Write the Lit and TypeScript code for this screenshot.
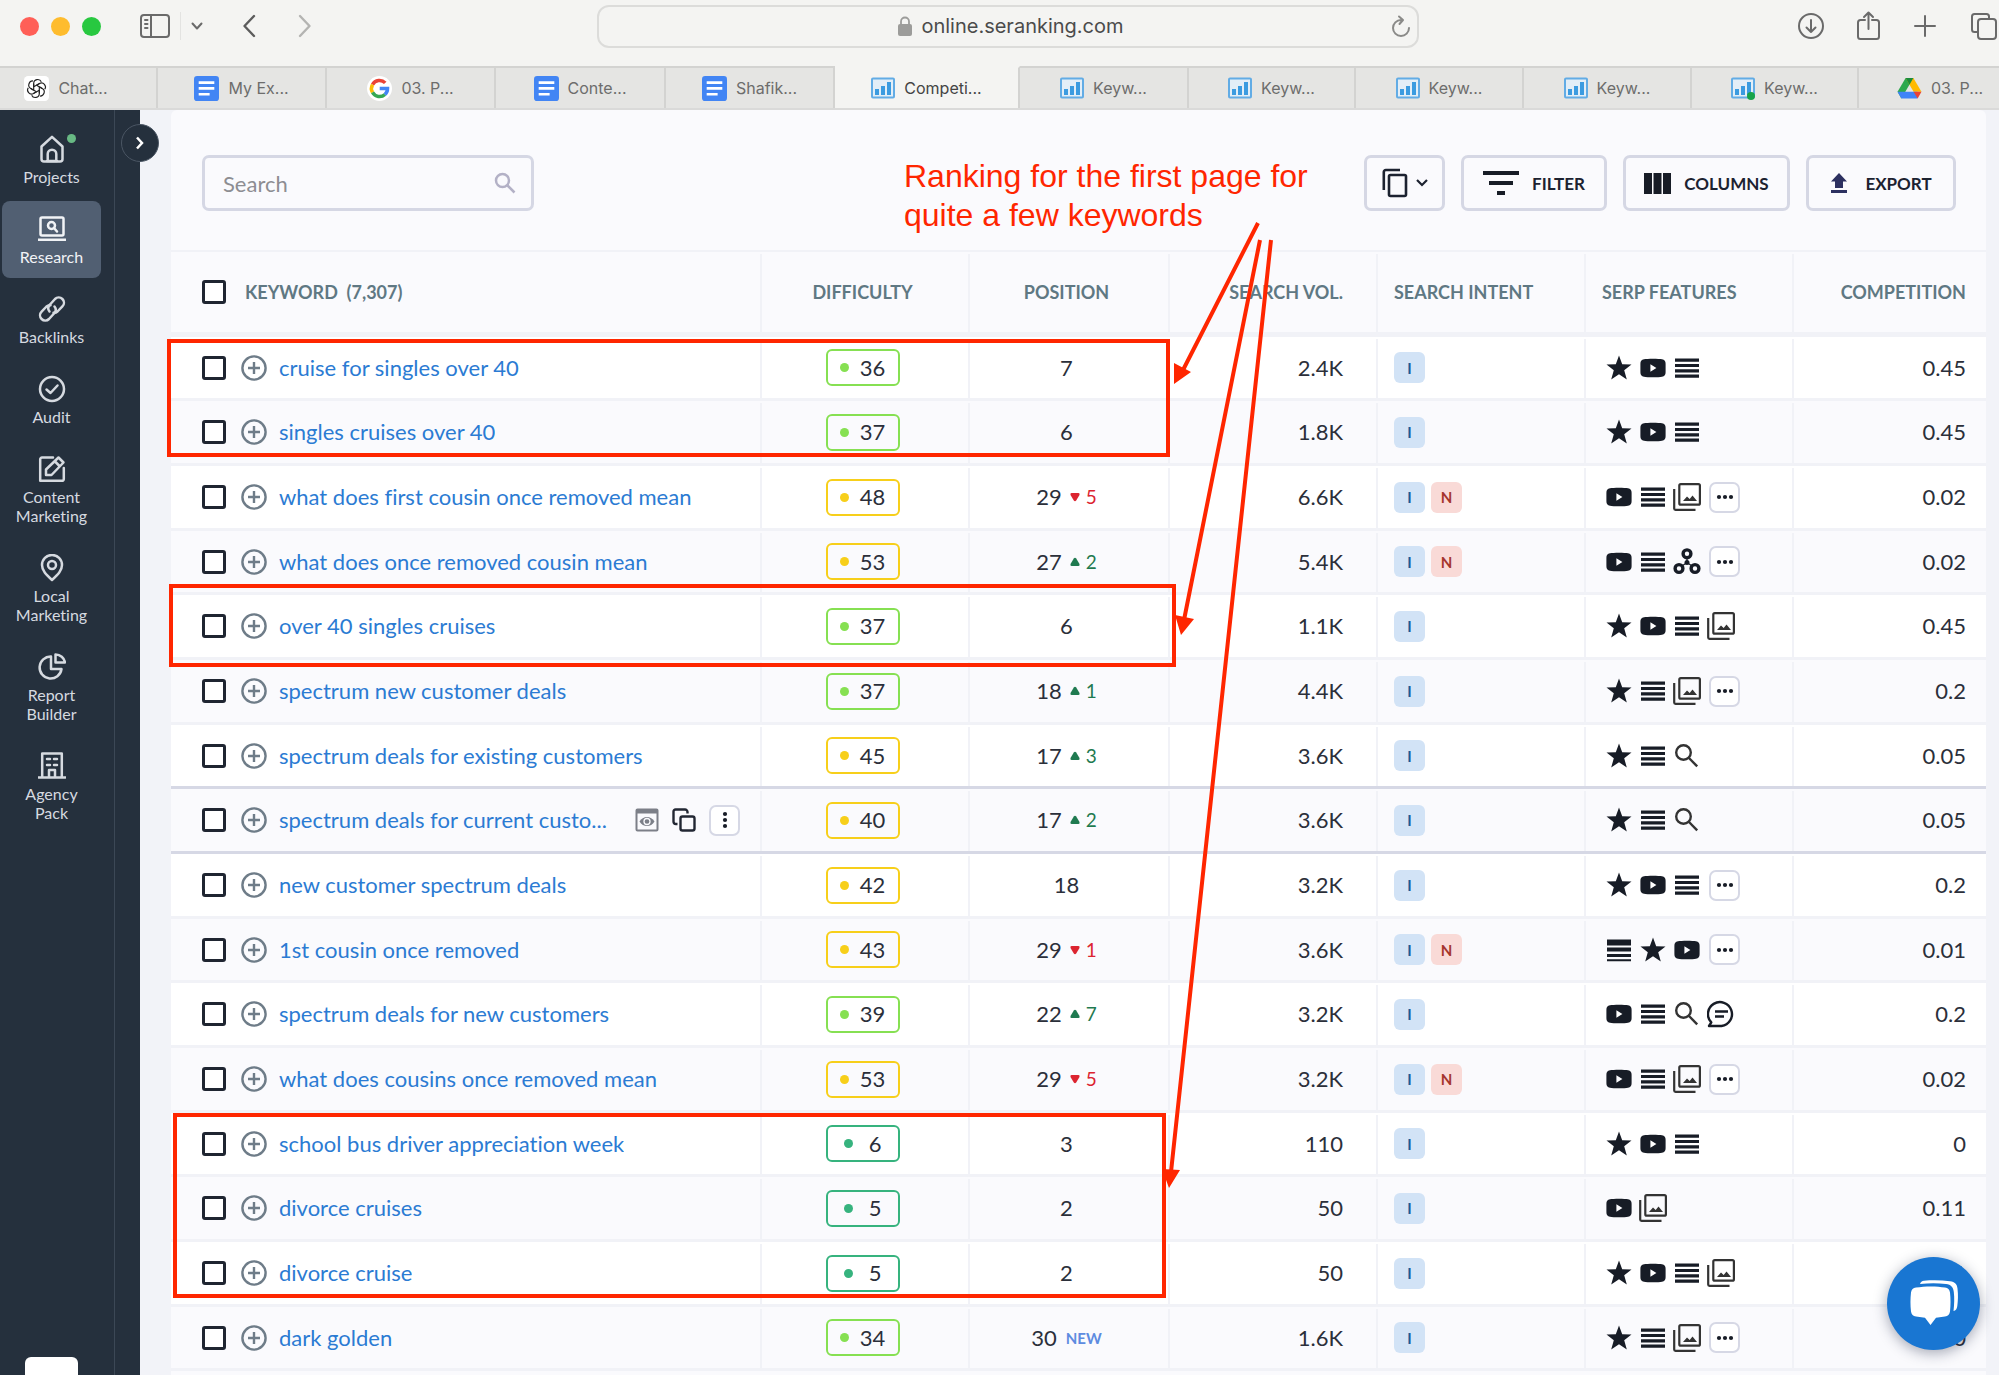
import { LitElement, html, css, svg, nothing } from 'lit';
import { customElement, state } from 'lit/decorators.js';
import { classMap } from 'lit/directives/class-map.js';

type Feature = 'star' | 'video' | 'lines' | 'links' | 'images' | 'knot' | 'search' | 'chat' | 'more';
type Level = 'low' | 'easy' | 'mid';

interface Row {
  keyword: string;
  difficulty: number;
  position: number;
  delta?: number;
  isNew?: boolean;
  volume: string;
  intents: string[];
  features: Feature[];
  competition: string;
  hovered?: boolean;
}

const row = (
  keyword: string, difficulty: number, position: number, volume: string, intents: string,
  features: string, competition: string, extra: Partial<Row> = {},
): Row => ({
  keyword, difficulty, position, volume, competition,
  intents: intents.split(''),
  features: features.split(' ') as Feature[],
  ...extra,
});

const ROWS: Row[] = [
  row('cruise for singles over 40', 36, 7, '2.4K', 'I', 'star video lines', '0.45'),
  row('singles cruises over 40', 37, 6, '1.8K', 'I', 'star video lines', '0.45'),
  row('what does first cousin once removed mean', 48, 29, '6.6K', 'IN', 'video lines images more', '0.02', { delta: -5 }),
  row('what does once removed cousin mean', 53, 27, '5.4K', 'IN', 'video lines knot more', '0.02', { delta: 2 }),
  row('over 40 singles cruises', 37, 6, '1.1K', 'I', 'star video lines images', '0.45'),
  row('spectrum new customer deals', 37, 18, '4.4K', 'I', 'star lines images more', '0.2', { delta: 1 }),
  row('spectrum deals for existing customers', 45, 17, '3.6K', 'I', 'star lines search', '0.05', { delta: 3 }),
  row('spectrum deals for current custo...', 40, 17, '3.6K', 'I', 'star lines search', '0.05', { delta: 2, hovered: true }),
  row('new customer spectrum deals', 42, 18, '3.2K', 'I', 'star video lines more', '0.2'),
  row('1st cousin once removed', 43, 29, '3.6K', 'IN', 'links star video more', '0.01', { delta: -1 }),
  row('spectrum deals for new customers', 39, 22, '3.2K', 'I', 'video lines search chat', '0.2', { delta: 7 }),
  row('what does cousins once removed mean', 53, 29, '3.2K', 'IN', 'video lines images more', '0.02', { delta: -5 }),
  row('school bus driver appreciation week', 6, 3, '110', 'I', 'star video lines', '0'),
  row('divorce cruises', 5, 2, '50', 'I', 'video images', '0.11'),
  row('divorce cruise', 5, 2, '50', 'I', 'star video lines images', '0.11'),
  row('dark golden', 34, 30, '1.6K', 'I', 'star lines images more', '0', { isNew: true }),
];

const FEATURES: Record<Exclude<Feature, 'more'>, unknown> = {
  star: svg`<path fill="#171c26" d="M14 1.500l3.200 8.700 9.300.4-7.300 5.700 2.600 9.200-7.800-5.200-7.800 5.200 2.600-9.200-7.300-5.700 9.300-.4z"/>`,
  video: svg`<path fill="#171c26" fill-rule="evenodd" d="M5 5.200C8 4.500 20 4.500 23 5.200c2.600.4 3.600 2 3.600 4.600v8.400c0 2.600-1 4.200-3.600 4.600-3 .7-15 .7-18 0C2.400 22.400 1.400 20.800 1.400 18.200V9.800C1.400 7.200 2.400 5.600 5 5.200zM11.400 10.200v7.600l6-3.800z"/>`,
  lines: svg`<path fill="#171c26" d="M2 4.600h24v3.200H2zM2 9.900h24v3.200H2zM2 15.200h24v3.200H2zM2 20.500h24v3.200H2z"/>`,
  links: svg`<path fill="#171c26" d="M2 3.500h24v6H2zM2 11.500h24v4H2zM2 18h24v3H2zM2 23.200h24v2H2z"/>`,
  images: svg`<g fill="none" stroke="#333" stroke-width="2.200"><rect x="6.300" y="1.100" width="20.600" height="20.600" rx="1.500"/><path d="M1.200 6v19.500a1.300 1.300 0 0 0 1.300 1.300H22.500"/></g><path fill="#333" d="M10 18l4-4.500 2.700 2.400L19.500 12.500l4.500 5.500z"/>`,
  knot: svg`<g fill="none" stroke="#171c26" stroke-width="3.400"><circle cx="14" cy="5.800" r="3.900"/><circle cx="6" cy="20.500" r="3.900"/><circle cx="22" cy="20.500" r="3.900"/></g><circle cx="14" cy="14.500" r="2.500" fill="#171c26"/><path stroke="#171c26" stroke-width="1.200" d="M14 9v5M14 14.500l-5 3.500M14 14.500l5 3.500"/>`,
  search: svg`<g fill="none" stroke="#333" stroke-width="2.400"><circle cx="10.500" cy="10.500" r="7.300"/><path d="M16 16l8.200 8.400"/></g>`,
  chat: svg`<g fill="none" stroke="#171c26" stroke-width="2.400" stroke-linejoin="round"><path d="M2 26l2.300-3.600A12 12 0 1 1 14.500 26z"/><path d="M8 11.500h13M8 16.500h9"/></g>`,
};

const svgIcon = (size: number, body: unknown, box = size) =>
  html`<svg width=${size} height=${size} viewBox="0 0 ${box} ${box}" aria-hidden="true">${body}</svg>`;

const NAV = [
  { label: 'Projects', dot: true, icon: svg`<path d="M3.500 11.500L14 1.800l10.500 9.700V24a2.500 2.500 0 0 1-2.500 2.500H6A2.500 2.500 0 0 1 3.500 24z"/><path d="M9.700 26V19a4.300 4.300 0 0 1 8.600 0v7M9 26h10"/>` },
  { label: 'Research', active: true, icon: svg`<rect x="2.500" y="2.500" width="23" height="18" rx="1.500"/><path d="M0 24.700h28"/><circle cx="13.500" cy="10.500" r="3.500"/><path d="M16 13l3 3.500"/>` },
  { label: 'Backlinks', icon: svg`<path d="M11.500 16.500c-2-2.500-1.500-5 .5-7l5-5.500a5.200 5.200 0 0 1 7.400 7.400L19.500 16.500a5 5 0 0 1-4 1.200"/><path d="M16.500 11.500c2 2.500 1.500 5-.5 7l-5 5.500a5.200 5.200 0 0 1-7.400-7.400L8.500 11.500a5 5 0 0 1 4-1.200"/>` },
  { label: 'Audit', icon: svg`<circle cx="14" cy="14" r="12"/><path d="M8.500 14.500l4 3.500 7-7.500"/>` },
  { label: 'Content\nMarketing', icon: svg`<path d="M15 2.500H4A1.800 1.800 0 0 0 2.200 4.300V25.800H24a1.800 1.800 0 0 0 1.800-1.800V13"/><path d="M20.500 2.500l5 5L13.500 20H8v-5.500zM17 6.500l4.500 4.500"/>` },
  { label: 'Local\nMarketing', icon: svg`<path d="M14 26C8 20.500 4 16.500 4 11a10 10 0 0 1 20 0C24 16.500 20 20.500 14 26z"/><circle cx="14" cy="11" r="4"/>` },
  { label: 'Report\nBuilder', icon: svg`<path d="M13 3.500A11 11 0 1 0 23.500 16H13z"/><path d="M17.500 1.500v8H27A9.500 9.500 0 0 0 17.500 1.500z"/>` },
  { label: 'Agency\nPack', icon: svg`<path d="M4.200 25V1.600h19.600V25M.8 25.400h26.400M11 25v-7h6v7M9 7h3M16 7h3M9 13h3M16 13h3"/>` },
];

const chart = svg`<rect x="1" y="2.500" width="22" height="19" rx="1" fill="#e3eef7" stroke="#62ace5" stroke-width="2"/><path fill="#3b9be0" d="M4 13h4v6H4zM10 10h4v9h-4zM16 6h4v13h-4z"/>`;

const FAVICONS: Record<string, unknown> = {
  gpt: svg`<rect width="24" height="24" rx="4" fill="#fff"/><g fill="none" stroke="#222" stroke-width="1.100">${[0, 60, 120, 180, 240, 300].map(
    (a) => svg`<path transform="rotate(${a} 12 12)" d="M9.300 13.500V7.200c0-4.400 5.800-5 7.300-1.700M9.300 13.600l-2.700-1.600"/>`,
  )}</g>`,
  docs: svg`<rect width="24" height="24" rx="3" fill="#4285f4"/><path fill="#fff" d="M4.500 5h15v2.600h-15zM4.500 10.600h15v2.600h-15zM4.500 16.200h10.500v2.600H4.500z"/>`,
  google: svg`<circle cx="12" cy="12" r="12" fill="#fff"/><g fill="none" stroke-width="3.400"><path stroke="#ea4335" d="M5.300 8.200A7.700 7.700 0 0 1 17.500 6.600"/><path stroke="#fbbc05" d="M5.300 15.800a7.700 7.700 0 0 1 0-7.600"/><path stroke="#34a853" d="M17.200 17.700A7.700 7.700 0 0 1 5.300 15.800"/><path stroke="#4285f4" d="M12.200 12h7.500a7.700 7.700 0 0 1-2.500 5.700"/></g>`,
  chart,
  chartLive: svg`${chart}<circle cx="20" cy="20" r="4" fill="#17a34a"/>`,
  drive: svg`<path fill="#2da94f" d="M8.300 2h7.400L4.200 21.500.5 15.200z"/><path fill="#ffba00" d="M8.300 2h7.400l7.800 13.200h-7.600z"/><path fill="#1b8b3c" d="M8.300 2h7.400L12 8.300z"/><path fill="#3f83f8" d="M4.200 15.200h15.500v6.300H4.200L.5 15.200z"/><path fill="#ea4335" d="M15.900 15.200h7.600l-3.700 6.300z"/>`,
};

const TABS: [string, string][] = [
  ['gpt', 'Chat...'], ['docs', 'My Ex...'], ['google', '03. P...'], ['docs', 'Conte...'], ['docs', 'Shafik...'],
  ['chart', 'Competi...'], ['chart', 'Keyw...'], ['chart', 'Keyw...'], ['chart', 'Keyw...'], ['chart', 'Keyw...'],
  ['chartLive', 'Keyw...'], ['drive', '03. P...'],
];

@customElement('browser-chrome')
class BrowserChrome extends LitElement {
  static styles = css`
    :host { display: block; font-family: Inter, 'Liberation Sans', sans-serif; }
    button { border: 0; background: none; padding: 0; font: inherit; color: inherit; display: flex; }
    .bar { display: grid; grid-template-columns: 597fr 822fr 580fr; align-items: center; height: 66px; box-sizing: border-box; padding-bottom: 14px; background: #f4f4f2; }
    .left, .right { display: flex; align-items: center; color: #6a6a6a; }
    .left { padding-left: 20px; gap: 12px; }
    .light { width: 19px; height: 19px; border-radius: 50%; }
    .red { background: #ff5f57; }
    .amber { background: #febc2e; }
    .green { background: #28c840; }
    .panes { margin-left: 27px; }
    .menu { border-left: 1px solid #e3e3e1; padding-left: 10px; margin-left: -2px; height: 28px; align-items: center; }
    .back { margin-left: 27px; color: #5c5c5c; }
    .forward { margin-left: 30px; color: #b4b4b2; }
    .right { justify-content: flex-end; gap: 31px; padding-right: 2px; }
    .address { display: flex; align-items: center; height: 43px; box-sizing: border-box; border: 2px solid #dcdcda; border-radius: 12px; padding: 0 6px 0 8px; color: #8a8a88; }
    .url { flex: 1; display: flex; justify-content: center; align-items: center; gap: 9px; padding-left: 24px; font-size: 20px; color: #4b4b4b; }
    .tabs { display: grid; grid-template-columns: 158fr 169fr 169fr 170fr 169fr 185fr 169fr 167fr 168fr 168fr 167fr 140fr; height: 44px; box-sizing: border-box; border-bottom: 2px solid #dadad9; }
    .tab { justify-content: center; align-items: center; gap: 9px; min-width: 0; font-size: 16px; color: #6d6d6c; background: #e5e5e3; border-right: 2px solid #d3d3d1; border-top: 2px solid #d3d3d1; white-space: nowrap; }
    .tab:first-child { padding-right: 24px; }
    .tab:last-child { padding-left: 22px; border-right: 0; }
    .tab.active { background: #f4f4f2; border-top-color: #f4f4f2; color: #444; }
  `;

  render() {
    const line = (w: number, h: number, body: unknown, sw = 2) =>
      html`<svg width=${w} height=${h} viewBox="0 0 ${w} ${h}" fill="none" stroke="currentColor" stroke-width=${sw} stroke-linecap="round" stroke-linejoin="round" aria-hidden="true">${body}</svg>`;
    return html`
      <div class="bar">
        <div class="left">
          <span class="light red"></span><span class="light amber"></span><span class="light green"></span>
          <button class="panes" aria-label="Sidebar">${line(30, 24, svg`<rect x="1" y="1" width="28" height="22" rx="3"/><path d="M11 1v22M5 6h2.500M5 10h2.500M5 14h2.500"/>`)}</button>
          <button class="menu" aria-label="Tab groups">${line(12, 8, svg`<path d="M1.500 1.500L6 6.500l4.500-5"/>`)}</button>
          <button class="back" aria-label="Back">${line(14, 24, svg`<path d="M12 2L2.500 12l9.500 10"/>`, 2.4)}</button>
          <button class="forward" aria-label="Forward">${line(14, 24, svg`<path d="M2 2l9.500 10L2 22"/>`, 2.4)}</button>
        </div>
        <div class="address">
          <span class="url"><svg width="14" height="20" viewBox="0 0 14 20" aria-hidden="true"><rect y="8" width="14" height="12" rx="2" fill="#9c9c9a"/><path d="M3 9V5.500a4 4 0 0 1 8 0V9" fill="none" stroke="#9c9c9a" stroke-width="1.800"/></svg>online.seranking.com</span>
          <button aria-label="Reload">${line(20, 22, svg`<path d="M10 5a8 8 0 1 0 8 8M8 1.500l4 3.500-3.500 4"/>`)}</button>
        </div>
        <div class="right">
          <button aria-label="Downloads">${line(28, 28, svg`<circle cx="14" cy="14" r="12"/><path d="M14 8v12M9.500 15.500L14 20l4.500-4.500"/>`)}</button>
          <button aria-label="Share">${line(26, 30, svg`<path d="M9 9H4.500A2.500 2.500 0 0 0 2 11.500v14A2.500 2.500 0 0 0 4.500 28h16a2.500 2.500 0 0 0 2.500-2.500v-14A2.500 2.500 0 0 0 20.500 9H16M12.500 18V2M8 6l4.500-4.500L17 6"/>`)}</button>
          <button aria-label="New tab">${line(26, 26, svg`<path d="M12 3v20M2 13h20"/>`)}</button>
          <button aria-label="Show tabs">${line(27, 28, svg`<rect x="8" y="7" width="18" height="20" rx="3"/><path d="M7 20H4.500A2.500 2.500 0 0 1 2 17.500v-13A2.500 2.500 0 0 1 4.500 2h12A2.500 2.500 0 0 1 19 4.500V6"/>`)}</button>
        </div>
      </div>
      <div class="tabs">
        ${TABS.map(([icon, label], i) => html`<button class=${classMap({ tab: true, active: i === 5 })}>${svgIcon(icon.startsWith('chart') ? 24 : 25, FAVICONS[icon], 24)}<span>${label}</span></button>`)}
      </div>`;
  }
}

@customElement('side-nav')
class SideNav extends LitElement {
  static styles = css`
    :host { display: flex; position: relative; background: #25303d; }
    nav { display: flex; flex-direction: column; gap: 3px; width: 115px; box-sizing: border-box; padding: 11px 13px 0 2px; border-right: 1px solid #3c4856; }
    .rail { width: 25px; }
    .item { display: flex; flex-direction: column; align-items: center; gap: 4px; padding: 14px 0 12px; border-radius: 8px; font-size: 16px; line-height: 19px; text-align: center; text-decoration: none; white-space: pre-line; color: #d6dae0; position: relative; }
    .item.active { background: #515f72; color: #f1f3f6; }
    .item svg { fill: none; stroke: currentColor; stroke-width: 2.500; stroke-linejoin: round; stroke-linecap: round; }
    .dot { position: absolute; top: 13px; right: 25px; width: 9px; height: 9px; border-radius: 50%; background: #68b984; }
    .toggle { position: absolute; right: -19px; top: 14px; width: 38px; height: 38px; padding: 0; border-radius: 50%; border: 1px solid #4b5664; background: #25303d; color: #fff; display: grid; place-items: center; }
    .account { position: absolute; left: 25px; bottom: 0; width: 53px; height: 18px; border-radius: 6px 6px 0 0; background: #fff; }
  `;

  render() {
    return html`
      <nav>
        ${NAV.map((n) => html`<a class=${classMap({ item: true, active: !!n.active })} href="#">${svgIcon(28, n.icon)}<span>${n.label}</span>${n.dot ? html`<i class="dot"></i>` : nothing}</a>`)}
      </nav>
      <div class="rail"></div>
      <button class="toggle" aria-label="Expand menu"><svg width="8" height="14" viewBox="0 0 8 14" fill="none" stroke="currentColor" stroke-width="2.500"><path d="M1 1.500L6 7l-5 5.500"/></svg></button>
      <div class="account"></div>`;
  }
}

@customElement('keyword-table')
class KeywordTable extends LitElement {
  @state() private rows = ROWS;

  static styles = css`
    :host { display: block; }
    table { width: 100%; border-collapse: separate; border-spacing: 0; table-layout: fixed; font-size: 22px; line-height: 26px; color: #2b2f3a; }
    .c-keyword { width: auto; }
    .c-metric { width: 208px; }
    .c-position { width: 200px; }
    .c-last { width: 194px; }
    th, td { box-sizing: border-box; padding: 0; border-bottom: 3px solid #f1f2f7; text-align: left; background: linear-gradient(#f1f2f7, #f1f2f7) left bottom / 2px calc(100% - 2px) no-repeat; }
    th:first-child, td:first-child { background: none; }
    th { height: 85px; border-bottom-width: 5px; font-size: 18px; font-weight: 700; color: #5f7883; }
    thead tr, tbody tr:nth-child(even) { background: #fafafd; }
    tbody tr { background: #fff; }
    td { height: 65px; }
    tr:nth-child(3n + 1) td { height: 64px; }
    .before td, .hovered td { border-bottom-color: #d6d8e5; }
    .keyword { display: flex; align-items: center; padding-left: 31px; padding-right: 20px; }
    input { appearance: none; flex: none; margin: 0; width: 24px; height: 24px; border: 3px solid #1f2531; border-radius: 3px; background: #fff; }
    .head { gap: 19px; }
    .head label { white-space: pre; }
    .add { flex: none; display: flex; margin: 0 12px 0 15px; padding: 0; border: 0; background: none; color: #6e7c88; }
    a { color: #2b7bd3; text-decoration: none; white-space: nowrap; overflow: hidden; }
    .actions { display: flex; align-items: center; gap: 13px; margin-left: auto; }
    .actions button { display: flex; border: 0; padding: 0; background: none; }
    .actions .square, .square { display: grid; place-items: center; width: 31px; height: 31px; box-sizing: border-box; padding: 0; border: 2px solid #d6d8e5; border-radius: 7px; background: #fff; }
    .center { text-align: center; padding-right: 3px; }
    .end { text-align: right; padding-right: 33px; }
    .last { padding-right: 20px; }
    .start { padding-left: 18px; }
    .badge { display: inline-flex; vertical-align: middle; align-items: center; justify-content: center; gap: 11px; width: 74px; height: 37px; box-sizing: border-box; border: 2px solid; border-radius: 6px; }
    .badge i { width: 9px; height: 9px; border-radius: 50%; background: currentColor; }
    .badge span { min-width: 18px; text-align: right; color: #2b2f3a; }
    .low { color: #36b37e; }
    .easy { color: #86e052; }
    .mid { color: #f7cf1a; }
    .position { display: flex; align-items: center; justify-content: center; }
    .delta { display: inline-flex; align-items: center; gap: 6px; margin-left: 8px; font-size: 19px; }
    .up { color: #1f7a50; }
    .down { color: #dc2430; }
    .new { margin-left: 9px; font-size: 15px; font-weight: 700; color: #5d8be0; }
    .list { display: flex; align-items: center; gap: 6px; }
    .intent { display: grid; place-items: center; width: 31px; height: 31px; border-radius: 6px; font-size: 15px; font-weight: 700; }
    .I { background: #d2e3f6; color: #1d5a96; }
    .N { background: #f9dad7; color: #a5352d; }
    .features { padding-left: 3px; }
    .features .square { margin-left: 2px; }
  `;

  private level(value: number): Level {
    return value < 20 ? 'low' : value < 40 ? 'easy' : 'mid';
  }

  private dots(vertical: boolean) {
    return svgIcon(18, [3, 9, 15].map((p) => (vertical ? svg`<circle cx="9" cy=${p} r="2.100" fill="#171c26"/>` : svg`<circle cx=${p} cy="9" r="2.100" fill="#171c26"/>`)));
  }

  private actions() {
    return html`<div class="actions">
      <button aria-label="Preview">${svgIcon(24, svg`<path fill="#7c7f88" d="M2.500.5h19A2 2 0 0 1 23.500 2.500v19a2 2 0 0 1-2 2h-19a2 2 0 0 1-2-2v-19a2 2 0 0 1 2-2z"/><path fill="#fafafd" d="M2.500 5.500h19v16h-19z"/><path fill="#7c7f88" fill-rule="evenodd" d="M4.500 13.500c3.500-6 11.500-6 15 0-3.500 6-11.500 6-15 0z"/><circle cx="12" cy="13.500" r="3" fill="#7c7f88" stroke="#fafafd" stroke-width="1.300"/>`)}</button>
      <button aria-label="Copy">${svgIcon(24, svg`<g fill="none" stroke="#222733" stroke-width="2.400"><rect x="8.500" y="8.500" width="14" height="14" rx="2"/><path d="M5.500 16H4a2.500 2.500 0 0 1-2.500-2.500v-10A2 2 0 0 1 3.500 1.500H13a2.500 2.500 0 0 1 2.500 2.500V5.500"/></g>`)}</button>
      <button class="square" aria-label="More actions">${this.dots(true)}</button>
    </div>`;
  }

  private delta(value: number) {
    const path = value > 0 ? 'M3.800 1.500Q5 0 6.200 1.500L9.500 7Q10 9 8.500 9h-7Q0 9 .5 7z' : 'M3.800 8.500Q5 10 6.200 8.500L9.500 3Q10 1 8.500 1h-7Q0 1 .5 3z';
    return html`<span class="delta ${value > 0 ? 'up' : 'down'}"><svg width="10" height="10" viewBox="0 0 10 10" aria-hidden="true"><path fill="currentColor" d=${path}/></svg>${Math.abs(value)}</span>`;
  }

  render() {
    return html`<table>
      <colgroup>
        <col class="c-keyword" /><col class="c-metric" /><col class="c-position" /><col class="c-metric" />
        <col class="c-metric" /><col class="c-metric" /><col class="c-last" />
      </colgroup>
      <thead>
        <tr>
          <th><div class="keyword head"><input type="checkbox" id="all" /><label for="all">KEYWORD  (7,307)</label></div></th>
          <th class="center">DIFFICULTY</th>
          <th class="center">POSITION</th>
          <th class="end">SEARCH VOL.</th>
          <th class="start">SEARCH INTENT</th>
          <th class="start">SERP FEATURES</th>
          <th class="end last">COMPETITION</th>
        </tr>
      </thead>
      <tbody>
        ${this.rows.map((r, i) => html`<tr class=${classMap({ hovered: !!r.hovered, before: !!this.rows[i + 1]?.hovered })}>
          <td><div class="keyword">
            <input type="checkbox" aria-label=${r.keyword} />
            <button class="add" aria-label="Add keyword">${svgIcon(26, svg`<g fill="none" stroke="currentColor" stroke-width="2.400"><circle cx="13" cy="13" r="11.600"/><path d="M13 7v12M7 13h12"/></g>`)}</button>
            <a href="#">${r.keyword}</a>
            ${r.hovered ? this.actions() : nothing}
          </div></td>
          <td class="center"><span class="badge ${this.level(r.difficulty)}"><i></i><span>${r.difficulty}</span></span></td>
          <td class="center"><div class="position">${r.position}${r.delta ? this.delta(r.delta) : nothing}${r.isNew ? html`<span class="new">NEW</span>` : nothing}</div></td>
          <td class="end">${r.volume}</td>
          <td class="start"><div class="list">${r.intents.map((t) => html`<span class="intent ${t}">${t}</span>`)}</div></td>
          <td class="start"><div class="list features">${r.features.map((f) => (f === 'more' ? html`<button class="square" aria-label="More features">${this.dots(false)}</button>` : svgIcon(28, FEATURES[f])))}</div></td>
          <td class="end last">${r.competition}</td>
        </tr>`)}
      </tbody>
    </table>`;
  }
}

@customElement('app-root')
class AppRoot extends LitElement {
  static styles = css`
    :host { display: flex; flex-direction: column; height: 100vh; overflow: hidden; font-family: Lato, 'Open Sans', sans-serif; font-variant-ligatures: none; background: #f2f3f8; }
    .body { flex: 1; display: flex; min-height: 0; }
    main { flex: 1; min-width: 0; padding: 0 13px 0 31px; }
    .panel { position: relative; min-height: 100%; background: #fafafd; border-radius: 6px 6px 0 0; }
    .tools { display: flex; align-items: center; gap: 16px; height: 142px; box-sizing: border-box; padding: 6px 30px 0 31px; border-bottom: 2px solid #f1f2f7; }
    .search { display: flex; align-items: center; width: 332px; height: 56px; box-sizing: border-box; border: 3px solid #d5d7e4; border-radius: 7px; padding: 0 15px 0 18px; margin-right: auto; }
    .search input { flex: 1; min-width: 0; border: 0; outline: 0; padding: 0; background: none; font: inherit; font-size: 22px; }
    .search input::placeholder { color: #8d8d92; opacity: 1; }
    .tool { display: flex; align-items: center; justify-content: center; gap: 13px; height: 56px; box-sizing: border-box; border: 3px solid #d5d7e4; border-radius: 7px; background: none; padding: 0; font: inherit; font-size: 17px; font-weight: 700; color: #1c2230; }
    .copy { width: 81px; gap: 8px; }
    .filter { width: 146px; }
    .columns { width: 167px; }
    .export { width: 150px; gap: 17px; }
    .note { position: absolute; left: 733px; top: 47px; margin: 0; font-family: 'Liberation Sans', Arial, sans-serif; font-size: 32px; line-height: 39px; white-space: pre-line; color: #ff2600; }
    .marks { position: absolute; left: 0; top: 0; overflow: visible; pointer-events: none; }
    .help { position: fixed; right: 19px; bottom: 25px; width: 93px; height: 93px; padding: 0; border: 0; border-radius: 50%; background: #1976d2; box-shadow: 0 3px 14px rgba(30, 40, 70, 0.4); display: grid; place-items: center; }
  `;

  render() {
    return html`
      <browser-chrome></browser-chrome>
      <div class="body">
        <side-nav></side-nav>
        <main>
          <div class="panel">
            <div class="tools">
              <div class="search">
                <input type="search" placeholder="Search" aria-label="Search" />
                <svg width="22" height="22" viewBox="0 0 22 22" fill="none" stroke="#b3b1c6" stroke-width="2.500" aria-hidden="true"><circle cx="8.500" cy="8.500" r="6.500"/><path d="M13.500 13.500l7 7"/></svg>
              </div>
              <button class="tool copy" aria-label="Copy">
                <svg width="26" height="30" viewBox="0 0 26 30" fill="none" stroke="#1c2230" stroke-width="2.600" aria-hidden="true"><rect x="7" y="7" width="17" height="21" rx="1.500"/><path d="M1.800 22V4A2 2 0 0 1 3.800 2H18"/></svg>
                <svg width="12" height="8" viewBox="0 0 12 8" fill="none" stroke="#1c2230" stroke-width="2.200" aria-hidden="true"><path d="M1 1l5 5 5-5"/></svg>
              </button>
              <button class="tool filter"><svg width="36" height="24" viewBox="0 0 36 24" fill="#171c26" aria-hidden="true"><path d="M0 0h36v4H0zM6 10h24v4H6zM14 20h8v4h-8z"/></svg>FILTER</button>
              <button class="tool columns"><svg width="27" height="21" viewBox="0 0 27 21" fill="#171c26" aria-hidden="true"><path d="M0 0h8v21H0zM9.500 0h8v21h-8zM19 0h8v21h-8z"/></svg>COLUMNS</button>
              <button class="tool export"><svg width="18" height="20" viewBox="0 0 18 20" fill="#2c3060" aria-hidden="true"><path d="M9 0l8 8.500h-4V15H5V8.500H1zM1 17h16v3H1z"/></svg>EXPORT</button>
            </div>
            <keyword-table></keyword-table>
            <p class="note">${'Ranking for the first page for\nquite a few keywords'}</p>
            <svg class="marks" width="1030" height="1200" viewBox="171 110 1030 1200" fill="none" stroke="#ff2600" stroke-width="4" aria-hidden="true">
              <rect x="169" y="341" width="999" height="114"/>
              <rect x="171" y="586" width="1003" height="79"/>
              <rect x="175" y="1115" width="989" height="181"/>
              <path d="M1258 223L1182 372M1260 240L1184 620M1271 240L1171 1172"/>
              <path fill="#ff2600" stroke="none" d="M1174 384v-21l17 9zM1181 635l-6-20 19 4zM1169 1188l-7-19 18 1z"/>
            </svg>
          </div>
        </main>
      </div>
      <button class="help" aria-label="Open chat">
        <svg width="50" height="48" viewBox="0 0 50 48" fill="#fff" aria-hidden="true"><path d="M7 7.500C16 6 28 6 36 7.500c3 .5 4.500 2 5 5 .7 6 .7 13 0 19-.5 3-2 4.500-5 5l-9 1.200L21.500 45 16 37.700 7 36.500c-3-.5-4.500-2-5-5-.7-6-.7-13 0-19 .5-3 2-4.500 5-5z"/><path d="M11 4C11.500 2 13 1 15 .8c9-.8 18-.5 26 .4 5 .6 7 2.800 7.500 7.300.8 7 .5 12-.2 17.500-.4 3-1.500 4.500-3.800 5 .8-7 1-13 .3-19C44.300 7 42 4.700 37 4 29 3 20 3 11 4z"/></svg>
      </button>`;
  }
}
